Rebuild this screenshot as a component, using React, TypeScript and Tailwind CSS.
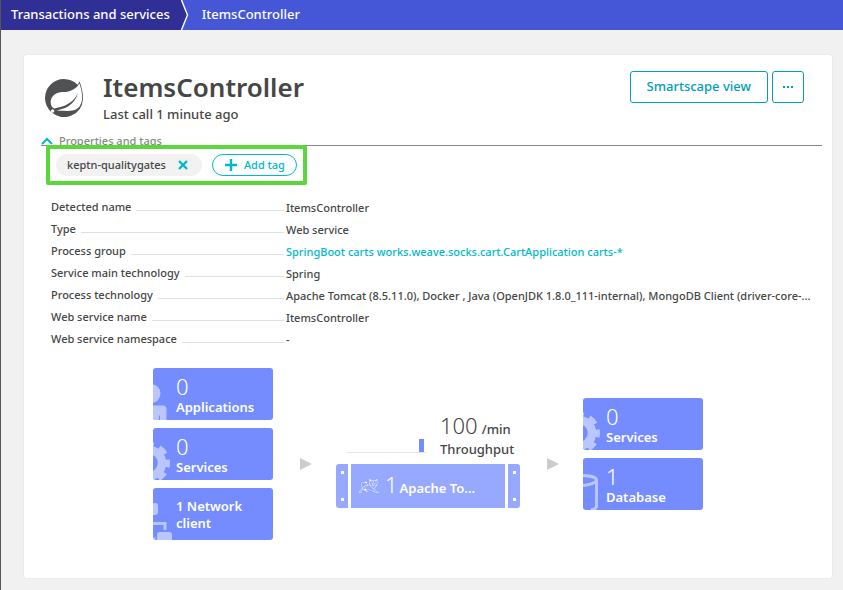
import type { ReactNode } from "react";
import { SiApachetomcat, SiSpring } from "react-icons/si";

const properties: { name: string; value: string; link?: boolean }[] = [
  { name: "Detected name", value: "ItemsController" },
  { name: "Type", value: "Web service" },
  {
    name: "Process group",
    value: "SpringBoot carts works.weave.socks.cart.CartApplication carts-*",
    link: true,
  },
  { name: "Service main technology", value: "Spring" },
  {
    name: "Process technology",
    value:
      "Apache Tomcat (8.5.11.0), Docker , Java (OpenJDK 1.8.0_111-internal), MongoDB Client (driver-core-...",
  },
  { name: "Web service name", value: "ItemsController" },
  { name: "Web service namespace", value: "-" },
];

function Breadcrumbs() {
  return (
    <nav className="flex h-[30px] bg-[#4556d7] text-[13px] font-medium text-white">
      <a href="#services" className="flex items-center bg-[#2f2f96] pr-[11px] pl-[10px] pb-px">
        Transactions and services
      </a>
      <svg width="9" height="30" viewBox="0 0 9 30" aria-hidden="true">
        <path d="M0 0H1L7 15L1 30H0Z" fill="#2f2f96" />
        <path d="M0.500 0L6.500 15L0.500 30" fill="none" stroke="#fff" strokeWidth="1.400" />
      </svg>
      <a href="#items" className="flex items-center pl-3 pb-px">
        ItemsController
      </a>
    </nav>
  );
}

function PersonIcon() {
  return (
    <svg width="20" height="36" viewBox="0 0 20 36" fill="#bac6ff">
      <circle cx="-2" cy="9.500" r="9.500" />
      <path d="M0 21.500H10Q13.500 21.500 13.500 25V36H7V31.500H6V36H0Z" />
    </svg>
  );
}

function GearIcon() {
  return (
    <svg width="20" height="38" viewBox="0 -2 20 38" fill="none" stroke="#bac6ff">
      <circle cx="-4" cy="19" r="13" strokeWidth="8.500" />
      <circle
        cx="-4"
        cy="19"
        r="18.500"
        strokeWidth="5"
        strokeDasharray="8.500 6.030"
        strokeDashoffset="4.250"
      />
    </svg>
  );
}

function NetworkIcon() {
  return (
    <svg width="20" height="38" viewBox="0 0 20 38" fill="#bac6ff">
      <path d="M0 1H2Q5 1 5 4V10Q5 13 2 13H0Z" />
      <path d="M0 20H13.500V28H10.500V23H0Z" />
      <path d="M7 30H16Q19 30 19 33V38H4V33Q4 30 7 30Z" />
      <path d="M0 35.500H2.500V38H0Z" />
    </svg>
  );
}

function DatabaseIcon() {
  return (
    <svg width="20" height="36" viewBox="0 0 20 36" fill="none" stroke="#bac6ff" strokeWidth="3">
      <path d="M-3 1.500C7 1.500 13.500 3.500 13.500 6S7 11.500 -3 11.500M13.500 6V32Q13.500 35 8 36" />
    </svg>
  );
}

function Tile({ icon, count, label }: { icon: ReactNode; count?: string; label: string }) {
  return (
    <div className="relative flex h-[52px] w-[120px] flex-col justify-center overflow-hidden rounded-[3px] bg-[#748cff] pt-[2px] pl-[23px] text-white">
      <div className="absolute bottom-0 left-0">{icon}</div>
      {count && <span className="text-[22px] leading-[25px] font-light">{count}</span>}
      <span className="text-[13px] leading-[17px] font-semibold">{label}</span>
    </div>
  );
}

function Arrow() {
  return (
    <svg className="mt-5 mr-6 ml-[27px]" width="12" height="12" viewBox="0 0 12 12" aria-hidden="true">
      <path d="M0 0L12 6L0 12Z" fill="#ccc" />
    </svg>
  );
}

function SideRail({ className }: { className: string }) {
  return (
    <div className={`flex w-3 flex-col items-center justify-between bg-[#97a9ff] py-[7px] ${className}`}>
      <i className="size-[3px] bg-white" />
      <i className="size-[3px] bg-white" />
    </div>
  );
}

function ServiceFlow() {
  return (
    <section className="mt-[18px] flex items-center justify-center">
      <div className="flex flex-col gap-2">
        <Tile icon={<PersonIcon />} count="0" label="Applications" />
        <Tile icon={<GearIcon />} count="0" label="Services" />
        <Tile icon={<NetworkIcon />} label="1 Network client" />
      </div>
      <Arrow />
      <div className="w-[184px] pt-3">
        <div className="flex h-[52px] pl-[10px]">
          <svg className="mt-[27px]" width="80" height="14" viewBox="0 0 80 14" aria-hidden="true">
            <path d="M0 13h80v1H0z" fill="#dfe5ff" />
            <path d="M73 0h5v13h-5z" fill="#748cff" />
          </svg>
          <div className="ml-[14px] whitespace-nowrap">
            <div className="flex h-7 items-baseline gap-1 leading-[26px]">
              <span className="text-[22px] font-light">100</span>
              <span className="text-[13px] font-medium">/min</span>
            </div>
            <div className="text-[13px] leading-[18px] font-medium">Throughput</div>
          </div>
        </div>
        <div className="flex h-11 gap-[3px]">
          <SideRail className="rounded-l-[3px]" />
          <div className="flex flex-1 items-center bg-[#97a9ff] pl-2 text-white">
            <SiApachetomcat size={20} />
            <div className="ml-[6px] flex items-baseline gap-[2px] pb-1">
              <span className="text-[22px] leading-[28px] font-light">1</span>
              <span className="text-[13px] font-semibold">Apache To...</span>
            </div>
          </div>
          <SideRail className="rounded-r-[3px]" />
        </div>
      </div>
      <Arrow />
      <div className="flex flex-col gap-2">
        <Tile icon={<GearIcon />} count="0" label="Services" />
        <Tile icon={<DatabaseIcon />} count="1" label="Database" />
      </div>
    </section>
  );
}

export default function App() {
  return (
    <div className="min-h-screen border-l border-[#555] bg-[#f1f1f1] pb-3 font-['Noto_Sans',sans-serif] text-[#454646]">
      <Breadcrumbs />
      <main className="mt-[25px] mr-[11px] ml-[23px] rounded-[2px] bg-white pb-[38px] shadow-[0_0_1px_#bbb]">
        <header className="flex items-start pt-4 pr-7 pl-[21px]">
          <SiSpring className="mt-2" size={38} color="#505152" />
          <div className="ml-5 flex-1">
            <h1 className="text-[26px] leading-8 font-semibold">ItemsController</h1>
            <p className="text-[13px] leading-[22px] font-medium">Last call 1 minute ago</p>
          </div>
          <div className="flex gap-1 text-[#00a1b2]">
            <button className="h-8 rounded-[3px] border border-[#00a1b2] px-4 text-[13px] font-medium">
              Smartscape view
            </button>
            <button
              aria-label="More actions"
              className="flex h-8 w-8 items-center justify-center gap-[2px] rounded-[3px] border border-[#00a1b2]"
            >
              <i className="size-[2px] bg-[#00a1b2]" />
              <i className="size-[2px] bg-[#00a1b2]" />
              <i className="size-[2px] bg-[#00a1b2]" />
            </button>
          </div>
        </header>

        <section className="mt-2 pr-[10px] pl-[17px] text-[11px] font-medium">
          <button className="flex h-[13px] w-full items-start border-b border-[#898989] text-left leading-4 text-[#898989]">
            <svg className="mt-1" width="12" height="8" viewBox="0 0 12 8" fill="none" aria-hidden="true">
              <path d="M1 7L6 2L11 7" stroke="#00b9cc" strokeWidth="2" />
            </svg>
            <span className="ml-[6px]">Properties and tags</span>
          </button>
          <div className="relative -mt-px ml-[5px] flex w-fit items-center gap-[10px] rounded-[2px] border-4 border-[#5ad83a] bg-white py-[5px] pr-[6px] pl-[6px]">
            <span className="flex h-[22px] items-center rounded-full bg-[#f2f2f2] pr-[14px] pl-[11px]">
              keptn-qualitygates
              <button aria-label="Remove tag" className="ml-3">
                <svg width="10" height="10" viewBox="0 0 10 10">
                  <path d="M1 1L9 9M9 1L1 9" stroke="#00b9cc" strokeWidth="2.400" />
                </svg>
              </button>
            </span>
            <button className="flex h-[22px] items-center rounded-full border border-[#00b9cc] pr-[11px] pl-3 text-[#00b9cc]">
              <svg className="mr-[7px]" width="12" height="12" viewBox="0 0 12 12">
                <path d="M6 0V12M0 6H12" stroke="#00b9cc" strokeWidth="2.400" />
              </svg>
              Add tag
            </button>
          </div>
        </section>

        <dl className="mt-[11px] mr-[17px] ml-[27px] text-[11px] leading-4 font-medium">
          {properties.map((p) => (
            <div key={p.name} className="flex h-[22px] items-center">
              <dt className="flex w-[233px] shrink-0 items-end whitespace-nowrap">
                {p.name}
                <span className="mb-1 ml-[5px] h-px flex-1 bg-[#e0e0e0]" />
              </dt>
              <dd className="mt-[2px] ml-[2px] min-w-0 flex-1 truncate">
                {p.link ? (
                  <a href="#process-group" className="text-[#00b9cc]">
                    {p.value}
                  </a>
                ) : (
                  p.value
                )}
              </dd>
            </div>
          ))}
        </dl>

        <ServiceFlow />
      </main>
    </div>
  );
}
